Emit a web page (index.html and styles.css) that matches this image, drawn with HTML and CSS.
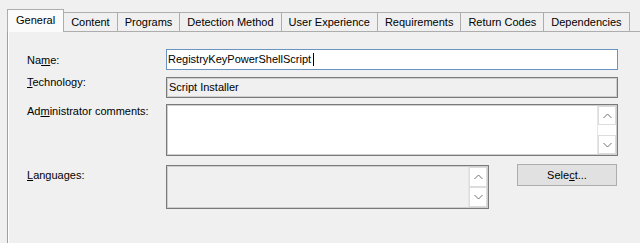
FILE: index.html
```html
<!DOCTYPE html>
<html lang="en">
<head>
  <meta charset="UTF-8">
  <title>Deployment Type Properties</title>
  <link rel="stylesheet" href="styles.css">
</head>
<body>
  <!-- Tab strip -->
  <div class="tab-strip">
    <div class="tab selected">General</div>
    <div class="tab">Content</div>
    <div class="tab">Programs</div>
    <div class="tab">Detection Method</div>
    <div class="tab">User Experience</div>
    <div class="tab">Requirements</div>
    <div class="tab">Return Codes</div>
    <div class="tab">Dependencies</div>
  </div>

  <!-- Tab page: General -->
  <div class="panel">
    <div class="row row-name">
      <label class="label">Na<u>m</u>e:</label>
      <div class="field textbox focused">RegistryKeyPowerShellScript<span class="caret"></span></div>
    </div>

    <div class="row row-tech">
      <label class="label"><u>T</u>echnology:</label>
      <div class="field textbox readonly">Script Installer</div>
    </div>

    <div class="row row-comments">
      <label class="label">Ad<u>m</u>inistrator comments:</label>
      <div class="field memo">
        <div class="memo-text"></div>
        <div class="vscroll">
          <div class="sbtn">
            <svg width="9" height="6" viewBox="0 0 9 6"><polyline points="0.5,5 4.5,1 8.5,5" fill="none" stroke="#707070" stroke-width="1"/></svg>
          </div>
          <div class="strack"></div>
          <div class="sbtn">
            <svg width="9" height="6" viewBox="0 0 9 6"><polyline points="0.5,1 4.5,5 8.5,1" fill="none" stroke="#707070" stroke-width="1"/></svg>
          </div>
        </div>
      </div>
    </div>

    <div class="row row-lang">
      <label class="label"><u>L</u>anguages:</label>
      <div class="lang-group">
        <div class="listbox">
          <div class="memo-text"></div>
          <div class="vscroll short">
            <div class="sbtn">
              <svg width="9" height="6" viewBox="0 0 9 6"><polyline points="0.5,5 4.5,1 8.5,5" fill="none" stroke="#707070" stroke-width="1"/></svg>
            </div>
            <div class="sbtn">
              <svg width="9" height="6" viewBox="0 0 9 6"><polyline points="0.5,1 4.5,5 8.5,1" fill="none" stroke="#707070" stroke-width="1"/></svg>
            </div>
            <div class="strack"></div>
          </div>
        </div>
        <button class="button">Sele<u>c</u>t...</button>
      </div>
    </div>
  </div>
</body>
</html>
```

FILE: styles.css
```css
/* Basic reset, dialog face colour */
html, body {
  margin: 0;
  padding: 0;
  height: 100%;
  overflow: hidden;
  background: #f0f0f0;
  font-family: "Liberation Sans", Arial, sans-serif;
  font-size: 11px;
  line-height: 13px;
  color: #000;
}
u { text-decoration: underline; text-underline-offset: 1px; }

/* Tabs along the top */
.tab-strip {
  display: flex;
  align-items: flex-end;
  height: 31px;
  padding-left: 7px;
}
.tab {
  height: 15px;
  padding: 3px 7px 0 7px;
  border: 1px solid #adadad;
  border-bottom: none;
  margin-left: -1px;
  background: #f0f0f0;
  white-space: nowrap;
}
.tab.selected {
  position: relative;
  z-index: 1;
  margin-left: 0;
  margin-bottom: -1px;
  height: 18px;
  padding: 4px 8px 0 8px;
  background: #fbfbfb;
}

/* Tab page */
.panel {
  margin-left: 7px;
  border-top: 1px solid #adadad;
  border-left: 1px solid #a0a0a0;
  height: 194px;
  padding: 17px 0 0 19px;
  box-shadow: inset 1px 0 0 #ffffff;
}
.row {
  display: flex;
  align-items: flex-start;
}
.label {
  flex: none;
  width: 139px;
}
.row-name { margin-bottom: 7px; }
.row-name .label { margin-top: 5px; }
.row-tech { margin-bottom: 6px; }
.row-tech .label { margin-top: -1px; }
.row-comments { margin-bottom: 8px; }
.row-comments .label { margin-top: 1px; }
.row-lang .label { margin-top: 5px; }

/* Edit boxes */
.field {
  width: 452px;
  box-sizing: border-box;
}
.textbox {
  height: 21px;
  padding: 3px 2px 0 2px;
  border: 1px solid #7a7a7a;
  box-shadow: inset 0 0 0 1px #cfcfcf;
  white-space: nowrap;
}
.textbox.focused {
  border-color: #6b93c0;
  box-shadow: none;
  background: #fff;
  padding-left: 1px;
}
.textbox.readonly {
  background: #f0f0f0;
  padding-top: 3px;
}
.caret {
  display: inline-block;
  width: 1px;
  height: 13px;
  margin-left: 2px;
  vertical-align: top;
  background: #000;
}

/* Multi-line box with scroll bar */
.memo, .listbox {
  display: flex;
  box-sizing: border-box;
  border: 1px solid #7a7a7a;
  box-shadow: inset 0 0 0 1px #cfcfcf;
  padding: 1px;
}
.memo {
  height: 52px;
  background: #fff;
}
.memo-text { flex: 1; }
.vscroll {
  display: flex;
  flex-direction: column;
  width: 18px;
  background: #fff;
  border-left: 1px solid #e6e6e6;
}
.sbtn {
  height: 17px;
  display: flex;
  align-items: center;
  justify-content: center;
  border: 1px solid #dcdcdc;
  background: #fff;
}
.strack { flex: 1; }

/* Languages list and Select button */
.lang-group {
  display: flex;
  align-items: flex-start;
}
.listbox {
  width: 323px;
  height: 44px;
  margin-top: 1px;
  background: #f0f0f0;
}
.vscroll.short .sbtn { height: 18px; }
.button {
  width: 100px;
  height: 22px;
  margin-left: 28px;
  padding: 0;
  border: 1px solid #adadad;
  background: #e1e1e1;
  font-family: "Liberation Sans", Arial, sans-serif;
  font-size: 11px;
  color: #000;
}
```
